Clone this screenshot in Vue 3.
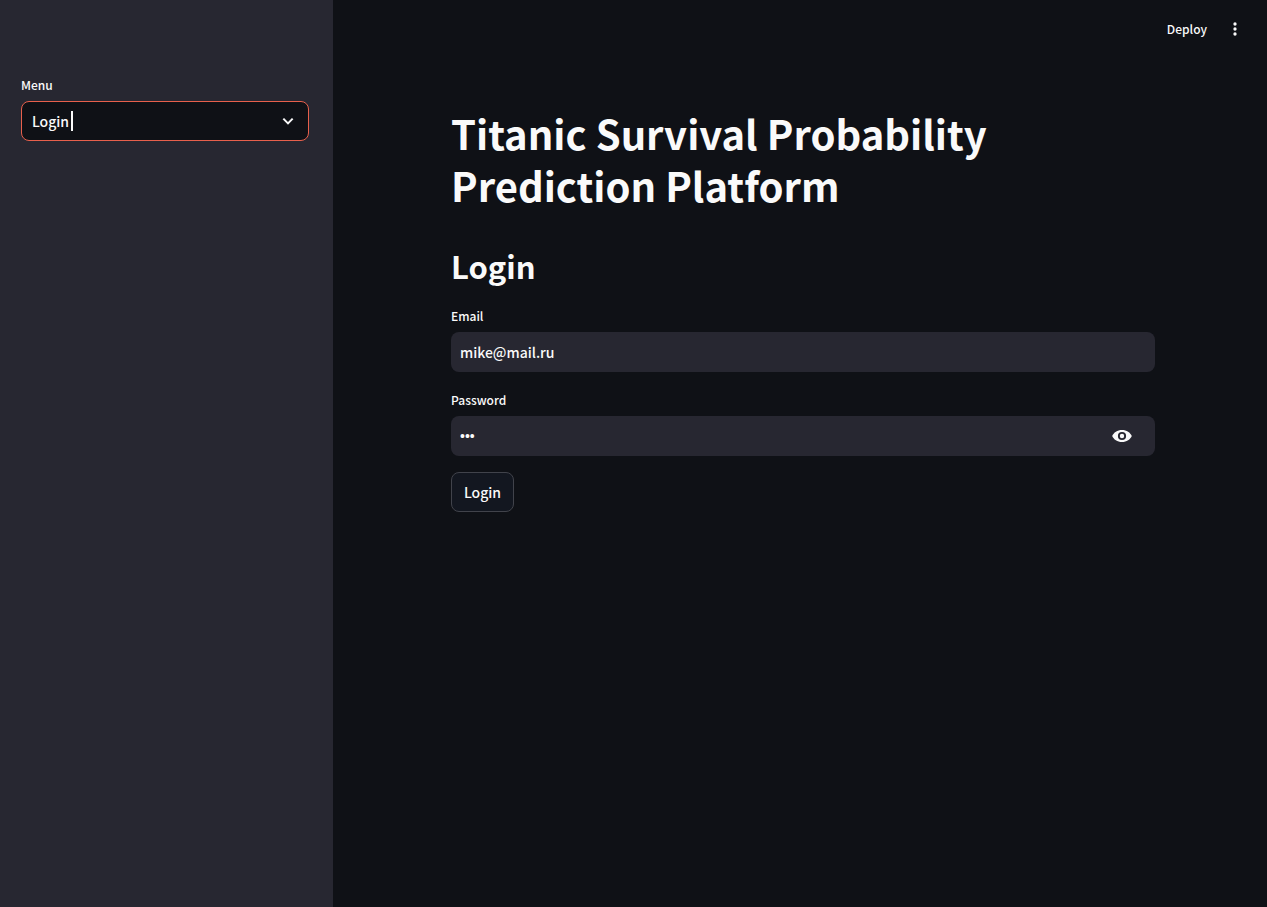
<script setup>
import { ref } from 'vue'

const page = ref('Login')
const pages = ['Login', 'Register']
const email = ref('mike@mail.ru')
const password = ref('123')
const revealed = ref(false)
</script>

<template>
  <div class="app">
    <aside class="sidebar">
      <label class="label" for="menu">Menu</label>
      <div class="select-box">
        <select id="menu" v-model="page">
          <option v-for="name in pages" :key="name">{{ name }}</option>
        </select>
        <span class="caret" aria-hidden="true"></span>
        <svg class="chevron" viewBox="0 0 24 24" aria-hidden="true">
          <path d="M5 8.5l7 7 7-7" />
        </svg>
      </div>
    </aside>

    <div class="page">
      <header class="toolbar">
        <button type="button" class="deploy">Deploy</button>
        <button type="button" class="more" aria-label="Main menu">
          <svg viewBox="0 0 24 24" aria-hidden="true">
            <circle cx="12" cy="4.5" r="2.5" />
            <circle cx="12" cy="12" r="2.5" />
            <circle cx="12" cy="19.5" r="2.5" />
          </svg>
        </button>
      </header>

      <main class="content">
        <h1>Titanic Survival Probability Prediction Platform</h1>
        <h2>Login</h2>
        <form @submit.prevent>
          <label class="label" for="email">Email</label>
          <div class="field">
            <input id="email" v-model="email" type="text" autocomplete="off" />
          </div>
          <label class="label" for="password">Password</label>
          <div class="field">
            <input
              id="password"
              v-model="password"
              :type="revealed ? 'text' : 'password'"
              autocomplete="off"
            />
            <button
              type="button"
              class="eye"
              aria-label="Show password text"
              @click="revealed = !revealed"
            >
              <svg viewBox="0 0 20 14" aria-hidden="true">
                <path
                  fill-rule="evenodd"
                  d="M10 1C5.400 1 1.600 3.600 0.200 7C1.600 10.400 5.400 13 10 13S18.400 10.400 19.800 7C18.400 3.600 14.600 1 10 1zM10 2.900a4.100 4.100 0 1 1 0 8.200a4.100 4.100 0 1 1 0-8.200zM10 4.800a2.200 2.200 0 1 0 0 4.400a2.200 2.200 0 1 0 0-4.400z"
                />
              </svg>
            </button>
          </div>
          <button type="submit" class="submit">Login</button>
        </form>
      </main>
    </div>
  </div>
</template>

<style>
body {
  background: #0f1116;
}
</style>

<style scoped>
.app {
  display: flex;
  min-height: 100vh;
  background: #0f1116;
  color: #fafafa;
  font-family: "Noto Sans CJK SC", "Noto Sans", sans-serif;
  font-size: 14px;
  font-weight: 500;
}

.app * {
  box-sizing: border-box;
}

button,
input,
select {
  margin: 0;
  padding: 0;
  border: 0;
  background: transparent;
  color: inherit;
  font: inherit;
  outline: none;
}

button {
  cursor: pointer;
}

.sidebar {
  flex: 0 0 333px;
  padding: 73px 24px 24px 21px;
  background: #272731;
}

.label {
  display: block;
  margin-bottom: 4px;
  font-size: 12px;
  line-height: 24px;
}

.select-box {
  position: relative;
}

.select-box select {
  display: block;
  width: 100%;
  height: 40px;
  padding: 0 40px 0 10px;
  border: 1px solid #e8604c;
  border-radius: 8px;
  background: #0f1116;
  appearance: none;
}

.caret {
  position: absolute;
  top: 10px;
  left: 50px;
  width: 2px;
  height: 20px;
  background: #fafafa;
}

.chevron {
  position: absolute;
  top: 12px;
  right: 13px;
  width: 16px;
  height: 16px;
  fill: none;
  stroke: #fafafa;
  stroke-width: 3;
  pointer-events: none;
}

.page {
  flex: 1;
  min-width: 0;
}

.toolbar {
  display: flex;
  justify-content: flex-end;
  align-items: center;
  gap: 20px;
  height: 58px;
  padding-right: 24px;
  font-size: 12px;
}

.deploy {
  padding-bottom: 2px;
}

.more {
  display: flex;
}

.more svg {
  width: 16px;
  height: 16px;
  fill: #fafafa;
}

.content {
  padding: 49px 24px 64px 30px;
}

.content > * {
  max-width: 704px;
  margin-right: auto;
  margin-left: auto;
}

h1 {
  margin-top: 0;
  margin-bottom: 33px;
  font-size: 40px;
  font-weight: 700;
  line-height: 52px;
}

h2 {
  margin-top: 0;
  margin-bottom: 17px;
  font-size: 31px;
  font-weight: 600;
  line-height: 43px;
}

.field {
  display: flex;
  align-items: center;
  height: 40px;
  margin-bottom: 16px;
  border-radius: 8px;
  background: #272731;
}

.field input {
  flex: 1;
  min-width: 0;
  height: 40px;
  padding: 0 9px;
}

.field input[type="password"] {
  font-family: "Liberation Sans", sans-serif;
}

.eye {
  display: flex;
  margin-right: 23px;
}

.eye svg {
  width: 20px;
  height: 14px;
  fill: #fafafa;
}

.submit {
  height: 40px;
  padding: 0 12px;
  border: 1px solid #41434b;
  border-radius: 8px;
  background: #131720;
}
</style>
